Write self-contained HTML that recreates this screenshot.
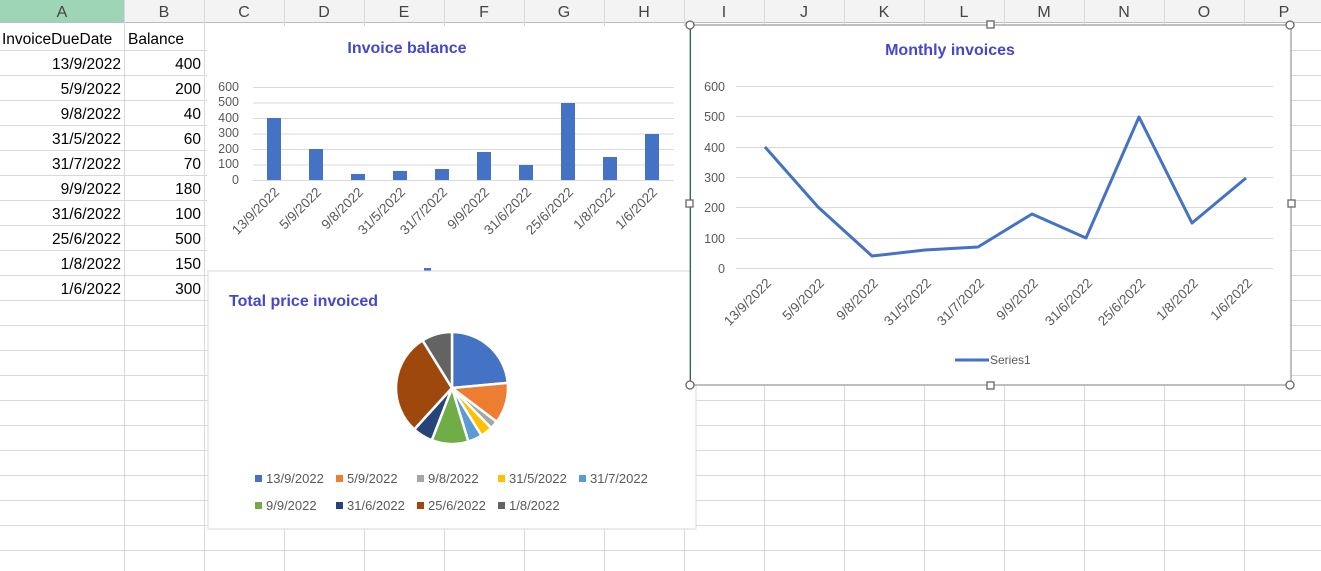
<!DOCTYPE html>
<html><head><meta charset="utf-8"><style>
body{margin:0;width:1321px;height:571px;overflow:hidden;background:#fff;font-family:"Liberation Sans",sans-serif;position:relative}
.a{position:absolute}
</style></head><body>
<svg class="a" style="left:0;top:0" width="1321" height="571" font-family="Liberation Sans, sans-serif">
<rect x="0" y="0" width="1321" height="22" fill="#f3f3f3"/>
<rect x="0" y="0" width="124" height="22" fill="#9fd5b7"/>
<line x1="0" y1="22.5" x2="1321" y2="22.5" stroke="#bcbcbc"/>
<g stroke="#d9d9d9">
<line x1="124.5" y1="0" x2="124.5" y2="571"/><line x1="204.5" y1="0" x2="204.5" y2="571"/>
<line x1="284.5" y1="0" x2="284.5" y2="571"/><line x1="364.5" y1="0" x2="364.5" y2="571"/>
<line x1="444.5" y1="0" x2="444.5" y2="571"/><line x1="524.5" y1="0" x2="524.5" y2="571"/>
<line x1="604.5" y1="0" x2="604.5" y2="571"/><line x1="684.5" y1="0" x2="684.5" y2="571"/>
<line x1="764.5" y1="0" x2="764.5" y2="571"/><line x1="844.5" y1="0" x2="844.5" y2="571"/>
<line x1="924.5" y1="0" x2="924.5" y2="571"/><line x1="1004.5" y1="0" x2="1004.5" y2="571"/>
<line x1="1084.5" y1="0" x2="1084.5" y2="571"/><line x1="1164.5" y1="0" x2="1164.5" y2="571"/>
<line x1="1244.5" y1="0" x2="1244.5" y2="571"/>
<line x1="0" y1="50.5" x2="1321" y2="50.5"/><line x1="0" y1="75.5" x2="1321" y2="75.5"/>
<line x1="0" y1="100.5" x2="1321" y2="100.5"/><line x1="0" y1="125.5" x2="1321" y2="125.5"/>
<line x1="0" y1="150.5" x2="1321" y2="150.5"/><line x1="0" y1="175.5" x2="1321" y2="175.5"/>
<line x1="0" y1="200.5" x2="1321" y2="200.5"/><line x1="0" y1="225.5" x2="1321" y2="225.5"/>
<line x1="0" y1="250.5" x2="1321" y2="250.5"/><line x1="0" y1="275.5" x2="1321" y2="275.5"/>
<line x1="0" y1="300.5" x2="1321" y2="300.5"/><line x1="0" y1="325.5" x2="1321" y2="325.5"/>
<line x1="0" y1="350.5" x2="1321" y2="350.5"/><line x1="0" y1="375.5" x2="1321" y2="375.5"/>
<line x1="0" y1="400.5" x2="1321" y2="400.5"/><line x1="0" y1="425.5" x2="1321" y2="425.5"/>
<line x1="0" y1="450.5" x2="1321" y2="450.5"/><line x1="0" y1="475.5" x2="1321" y2="475.5"/>
<line x1="0" y1="500.5" x2="1321" y2="500.5"/><line x1="0" y1="525.5" x2="1321" y2="525.5"/>
<line x1="0" y1="550.5" x2="1321" y2="550.5"/>
</g>
<g font-size="16" fill="#444" text-anchor="middle">
<text x="62" y="17">A</text><text x="164" y="17">B</text><text x="244" y="17">C</text><text x="324" y="17">D</text>
<text x="404" y="17">E</text><text x="484" y="17">F</text><text x="564" y="17">G</text><text x="644" y="17">H</text>
<text x="724" y="17">I</text><text x="804" y="17">J</text><text x="884" y="17">K</text><text x="964" y="17">L</text>
<text x="1044" y="17">M</text><text x="1124" y="17">N</text><text x="1204" y="17">O</text><text x="1284" y="17">P</text>
</g>
<g font-size="15.5" fill="#000">
<text x="2" y="44">InvoiceDueDate</text><text x="128" y="44">Balance</text>
<g text-anchor="end">
<text x="121" y="69">13/9/2022</text><text x="201" y="69">400</text>
<text x="121" y="94">5/9/2022</text><text x="201" y="94">200</text>
<text x="121" y="119">9/8/2022</text><text x="201" y="119">40</text>
<text x="121" y="144">31/5/2022</text><text x="201" y="144">60</text>
<text x="121" y="169">31/7/2022</text><text x="201" y="169">70</text>
<text x="121" y="194">9/9/2022</text><text x="201" y="194">180</text>
<text x="121" y="219">31/6/2022</text><text x="201" y="219">100</text>
<text x="121" y="244">25/6/2022</text><text x="201" y="244">500</text>
<text x="121" y="269">1/8/2022</text><text x="201" y="269">150</text>
<text x="121" y="294">1/6/2022</text><text x="201" y="294">300</text>
</g></g>

<!-- Bar chart -->
<rect x="207" y="26" width="483" height="245" fill="#fff"/>
<text x="407" y="53" text-anchor="middle" font-size="16" font-weight="bold" fill="#4646cc">Invoice balance</text>
<g stroke="#d9d9d9">
<line x1="253" y1="87.5" x2="674" y2="87.5"/><line x1="253" y1="103" x2="674" y2="103"/>
<line x1="253" y1="118.5" x2="674" y2="118.5"/><line x1="253" y1="134" x2="674" y2="134"/>
<line x1="253" y1="149.5" x2="674" y2="149.5"/><line x1="253" y1="165" x2="674" y2="165"/>
<line x1="253" y1="180.5" x2="674" y2="180.5"/></g>
<g font-size="12.5" fill="#595959" text-anchor="end">
<text x="239" y="91">600</text><text x="239" y="106">500</text><text x="239" y="122">400</text>
<text x="239" y="137">300</text><text x="239" y="153">200</text><text x="239" y="168">100</text><text x="239" y="184">0</text></g>
<g fill="#4472c4">
<rect x="267" y="118" width="14" height="62"/><rect x="309" y="149" width="14" height="31"/>
<rect x="351" y="174" width="14" height="6"/><rect x="393" y="171" width="14" height="9"/>
<rect x="435" y="169" width="14" height="11"/><rect x="477" y="152" width="14" height="28"/>
<rect x="519" y="165" width="14" height="15"/><rect x="561" y="103" width="14" height="77"/>
<rect x="603" y="157" width="14" height="23"/><rect x="645" y="134" width="14" height="46"/></g>
<g font-size="13.5" fill="#595959" text-anchor="end">
<text transform="translate(280,193) rotate(-45)">13/9/2022</text>
<text transform="translate(322,193) rotate(-45)">5/9/2022</text>
<text transform="translate(364,193) rotate(-45)">9/8/2022</text>
<text transform="translate(406,193) rotate(-45)">31/5/2022</text>
<text transform="translate(448,193) rotate(-45)">31/7/2022</text>
<text transform="translate(490,193) rotate(-45)">9/9/2022</text>
<text transform="translate(532,193) rotate(-45)">31/6/2022</text>
<text transform="translate(574,193) rotate(-45)">25/6/2022</text>
<text transform="translate(616,193) rotate(-45)">1/8/2022</text>
<text transform="translate(658,193) rotate(-45)">1/6/2022</text></g>
<rect x="424" y="268" width="7" height="3" fill="#4472c4"/>

<!-- Pie chart -->
<rect x="208" y="271" width="488" height="258" fill="#fff" stroke="#d9d9d9"/>
<text x="229" y="306" font-size="16" font-weight="bold" fill="#4646cc">Total price invoiced</text>
<g stroke="#fff" stroke-width="2.5" stroke-linejoin="round">
<path d="M452,388 L452,332 A56,56 0 0 1 507.76,382.84Z" fill="#4472c4"/>
<path d="M452,388 L507.76,382.84 A56,56 0 0 1 496.68,421.76Z" fill="#ed7d31"/>
<path d="M452,388 L496.68,421.76 A56,56 0 0 1 491.23,427.96Z" fill="#a5a5a5"/>
<path d="M452,388 L491.23,427.96 A56,56 0 0 1 481.48,435.61Z" fill="#ffc000"/>
<path d="M452,388 L481.48,435.61 A56,56 0 0 1 468.32,441.57Z" fill="#5b9bd5"/>
<path d="M452,388 L468.32,441.57 A56,56 0 0 1 431.77,440.22Z" fill="#70ad47"/>
<path d="M452,388 L431.77,440.22 A56,56 0 0 1 414.27,429.38Z" fill="#264478"/>
<path d="M452,388 L414.27,429.38 A56,56 0 0 1 422.51,340.39Z" fill="#9e480e"/>
<path d="M452,388 L422.51,340.39 A56,56 0 0 1 452,332Z" fill="#636363"/>
</g>
<g font-size="13" fill="#595959">
<rect x="255" y="475" width="7" height="7" fill="#4472c4"/><text x="266" y="483">13/9/2022</text>
<rect x="336" y="475" width="7" height="7" fill="#ed7d31"/><text x="347" y="483">5/9/2022</text>
<rect x="417" y="475" width="7" height="7" fill="#a5a5a5"/><text x="428" y="483">9/8/2022</text>
<rect x="498" y="475" width="7" height="7" fill="#ffc000"/><text x="509" y="483">31/5/2022</text>
<rect x="579" y="475" width="7" height="7" fill="#5b9bd5"/><text x="590" y="483">31/7/2022</text>
<rect x="255" y="502" width="7" height="7" fill="#70ad47"/><text x="266" y="510">9/9/2022</text>
<rect x="336" y="502" width="7" height="7" fill="#264478"/><text x="347" y="510">31/6/2022</text>
<rect x="417" y="502" width="7" height="7" fill="#9e480e"/><text x="428" y="510">25/6/2022</text>
<rect x="498" y="502" width="7" height="7" fill="#636363"/><text x="509" y="510">1/8/2022</text>
</g>

<!-- Line chart -->
<rect x="690" y="25" width="601" height="360" fill="#fff" stroke="#7f7f7f"/>
<line x1="690.5" y1="25" x2="690.5" y2="385" stroke="#217346"/>
<text x="950" y="55" text-anchor="middle" font-size="16" font-weight="bold" fill="#4646cc">Monthly invoices</text>
<g stroke="#d9d9d9">
<line x1="736" y1="86.5" x2="1273" y2="86.5"/><line x1="736" y1="116.5" x2="1273" y2="116.5"/>
<line x1="736" y1="147.5" x2="1273" y2="147.5"/><line x1="736" y1="177.5" x2="1273" y2="177.5"/>
<line x1="736" y1="207.5" x2="1273" y2="207.5"/><line x1="736" y1="238.5" x2="1273" y2="238.5"/>
<line x1="736" y1="268.5" x2="1273" y2="268.5"/></g>
<g font-size="12.5" fill="#595959" text-anchor="end">
<text x="725" y="91">600</text><text x="725" y="121">500</text><text x="725" y="152">400</text>
<text x="725" y="182">300</text><text x="725" y="212">200</text><text x="725" y="243">100</text><text x="725" y="273">0</text></g>
<polyline points="765,147 818,207 872,256 925,250 978,247 1032,214 1086,238 1139,117 1192,223 1246,178" fill="none" stroke="#4472c4" stroke-width="3" stroke-linejoin="round"/>
<g font-size="13.5" fill="#595959" text-anchor="end">
<text transform="translate(772,284) rotate(-45)">13/9/2022</text>
<text transform="translate(825,284) rotate(-45)">5/9/2022</text>
<text transform="translate(879,284) rotate(-45)">9/8/2022</text>
<text transform="translate(932,284) rotate(-45)">31/5/2022</text>
<text transform="translate(985,284) rotate(-45)">31/7/2022</text>
<text transform="translate(1039,284) rotate(-45)">9/9/2022</text>
<text transform="translate(1093,284) rotate(-45)">31/6/2022</text>
<text transform="translate(1146,284) rotate(-45)">25/6/2022</text>
<text transform="translate(1199,284) rotate(-45)">1/8/2022</text>
<text transform="translate(1253,284) rotate(-45)">1/6/2022</text></g>
<line x1="955" y1="360" x2="989" y2="360" stroke="#4472c4" stroke-width="3"/>
<text x="990" y="364" font-size="12" fill="#595959">Series1</text>
<g fill="#fff" stroke="#666" stroke-width="1.3">
<circle cx="690" cy="25" r="4"/><circle cx="1290" cy="25" r="4"/>
<circle cx="690" cy="385" r="4"/><circle cx="1290" cy="385" r="4"/>
<rect x="987" y="21" width="7" height="7"/><rect x="987" y="382" width="7" height="7"/>
<rect x="686" y="200" width="7" height="7"/><rect x="1288" y="200" width="7" height="7"/>
</g>
</svg>
</body></html>
